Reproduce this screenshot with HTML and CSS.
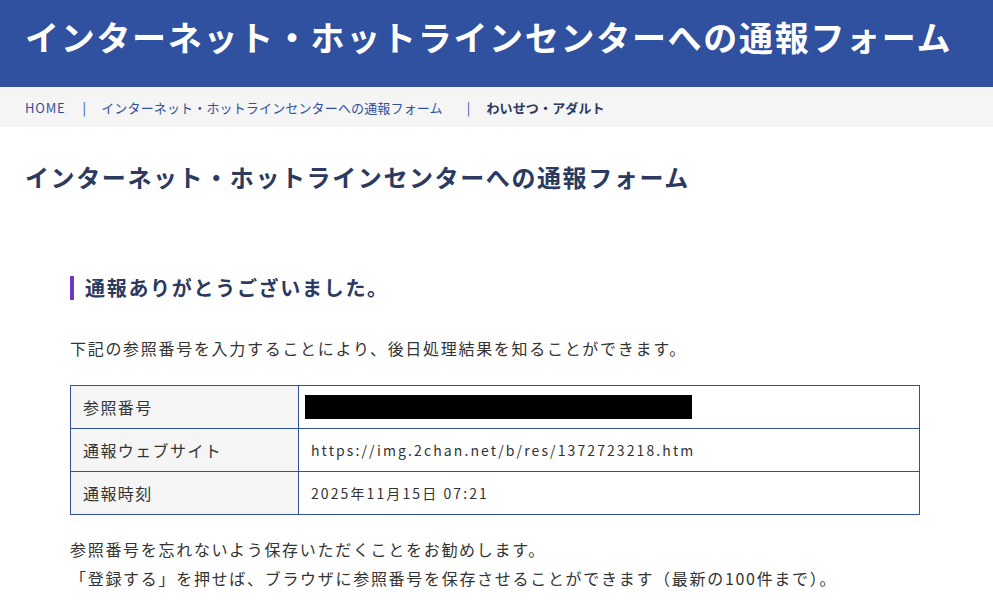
FILE: index.html
```html
<!DOCTYPE html>
<html lang="ja">
<head>
    <meta charset="UTF-8">
    <title>インターネット・ホットラインセンターへの通報フォーム</title>
    <link rel="stylesheet" href="styles.css">
</head>
<body>

    <header class="site-header">
        <div class="site-title">インターネット・ホットラインセンターへの通報フォーム</div>
    </header>

    <nav class="breadcrumb">
        <a href="#" class="home">HOME</a>
        <span class="sep">|</span>
        <a href="#">インターネット・ホットラインセンターへの通報フォーム</a>
        <span class="sep sep-last">|</span>
        <strong>わいせつ・アダルト</strong>
    </nav>

    <main class="content">
        <h1 class="page-title">インターネット・ホットラインセンターへの通報フォーム</h1>

        <section class="result">
            <h2 class="result-title">通報ありがとうございました。</h2>
            <p class="lead">下記の参照番号を入力することにより、後日処理結果を知ることができます。</p>

            <table class="report-table">
                <tr>
                    <th>参照番号</th>
                    <td><span class="redacted"></span></td>
                </tr>
                <tr>
                    <th>通報ウェブサイト</th>
                    <td class="mono">https://img.2chan.net/b/res/1372723218.htm</td>
                </tr>
                <tr>
                    <th>通報時刻</th>
                    <td class="mono">2025年11月15日 07:21</td>
                </tr>
            </table>

            <p class="note">参照番号を忘れないよう保存いただくことをお勧めします。<br>
            「登録する」を押せば、ブラウザに参照番号を保存させることができます（最新の100件まで）。</p>
        </section>
    </main>

</body>
</html>
```

FILE: styles.css
```css
body {
    margin: 0;
    padding: 0;
    background: #fff;
    font-family: "Noto Sans CJK JP", "Noto Sans", sans-serif;
    color: #333;
}

a {
    text-decoration: none;
    color: #3050a0;
}

/* ヘッダー */
.site-header {
    background-color: #3050a0;
    height: 87px;
    box-sizing: border-box;
    padding: 15px 0 0 25px;
}

.site-title {
    color: #fff;
    font-size: 34px;
    font-weight: bold;
    letter-spacing: 1.7px;
    line-height: 44px;
}

/* パンくず */
.breadcrumb {
    background-color: #f5f5f5;
    height: 40px;
    display: flex;
    align-items: center;
    padding-left: 25px;
    font-size: 13px;
    letter-spacing: 0.15px;
    color: #3050a0;
}

.breadcrumb .home {
    letter-spacing: 0.8px;
}

.breadcrumb .sep {
    margin: 0 15px 0 17px;
}

.breadcrumb .sep-last {
    margin: 0 16px 0 24px;
}

.breadcrumb strong {
    color: #2b3a5e;
}

/* 本文 */
.content {
    padding: 0 25px;
}

.page-title {
    margin: 33px 0 0;
    font-size: 24px;
    letter-spacing: 1.6px;
    line-height: 34px;
    color: #2b3a5e;
}

.result {
    padding: 0 48px 30px 45px;
}

.result-title {
    margin: 82px 0 0;
    padding-left: 11px;
    border-left: 4px solid #6a3cc4;
    font-size: 20px;
    letter-spacing: 1.7px;
    line-height: 24px;
    color: #2b3a5e;
}

.lead {
    margin: 36px 0 0;
    font-size: 16px;
    letter-spacing: 1.7px;
    line-height: 24px;
}

.report-table {
    width: 100%;
    margin-top: 25px;
    border-collapse: collapse;
    font-size: 16px;
}

.report-table th,
.report-table td {
    border: 1px solid #3050a0;
    height: 42px;
    padding: 0 12px;
    text-align: left;
}

.report-table th {
    width: 203px;
    background-color: #f5f5f5;
    font-weight: normal;
    letter-spacing: 1.4px;
}

.report-table .mono {
    font-size: 14px;
    letter-spacing: 2.1px;
    color: #333;
}

.redacted {
    display: block;
    width: 387px;
    height: 24px;
    margin-left: -6px;
    background: #000;
}

.note {
    margin: 20px 0 0;
    font-size: 16px;
    letter-spacing: 1.7px;
    line-height: 29px;
}
```
